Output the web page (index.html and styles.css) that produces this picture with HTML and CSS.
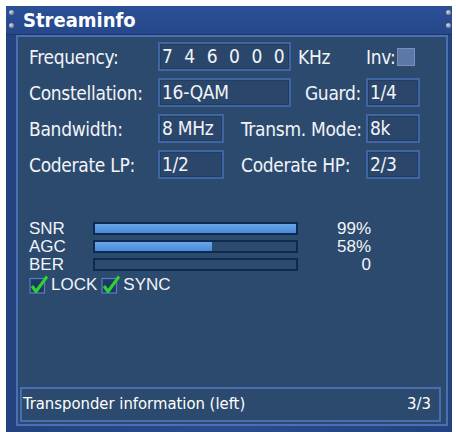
FILE: index.html
```html
<!DOCTYPE html>
<html>
<head>
<meta charset="utf-8">
<link rel="stylesheet" href="styles.css">
</head>
<body>
<div class="window">
  <div class="titlebar">
    <span class="screw s1"></span><span class="screw s2"></span>
    <span class="screw s3"></span><span class="screw s4"></span>
    <span class="title">Streaminfo</span>
  </div>
  <div class="frame">
    <div class="panel">
      <div class="fields">
        <div class="row">
          <span class="label">Frequency:</span>
          <span class="box wide freq">746000</span>
          <span class="unit">KHz</span>
          <span class="inv">Inv:</span>
          <span class="check"></span>
        </div>
        <div class="row">
          <span class="label">Constellation:</span>
          <span class="box wide">16-QAM</span>
          <span class="rlabel short">Guard:</span>
          <span class="box small">1/4</span>
        </div>
        <div class="row">
          <span class="label">Bandwidth:</span>
          <span class="box mid">8 MHz</span>
          <span class="rlabel long">Transm. Mode:</span>
          <span class="box small">8k</span>
        </div>
        <div class="row">
          <span class="label">Coderate LP:</span>
          <span class="box mid">1/2</span>
          <span class="rlabel long">Coderate HP:</span>
          <span class="box small">2/3</span>
        </div>
      </div>
      <div class="signal">
        <div class="srow">
          <span class="sname">SNR</span>
          <span class="bar"><span class="fill" style="width:100%"></span></span>
          <span class="sval">99%</span>
        </div>
        <div class="srow">
          <span class="sname">AGC</span>
          <span class="bar"><span class="fill" style="width:58%"></span></span>
          <span class="sval">58%</span>
        </div>
        <div class="srow">
          <span class="sname">BER</span>
          <span class="bar"><span class="fill" style="width:0%"></span></span>
          <span class="sval">0</span>
        </div>
        <div class="srow locks">
          <svg class="tick" width="20" height="20" viewBox="0 0 20 20"><rect x="1" y="3.5" width="14.5" height="14.5" fill="#1d3a66" stroke="#5a7cc0" stroke-width="1.2"/><path d="M3 11 L7 16.5 L18 1.5" fill="none" stroke="#2fd22f" stroke-width="3" stroke-linejoin="round"/></svg>
          <span class="lk">LOCK</span>
          <svg class="tick" width="20" height="20" viewBox="0 0 20 20"><rect x="1" y="3.5" width="14.5" height="14.5" fill="#1d3a66" stroke="#5a7cc0" stroke-width="1.2"/><path d="M3 11 L7 16.5 L18 1.5" fill="none" stroke="#2fd22f" stroke-width="3" stroke-linejoin="round"/></svg>
          <span class="lk">SYNC</span>
        </div>
      </div>
      <div class="status">
        <span>Transponder information (left)</span>
        <span>3/3</span>
      </div>
    </div>
  </div>
</div>
</body>
</html>
```

FILE: styles.css
```css
html, body {
  margin: 0;
  padding: 0;
  background: #ffffff;
}
body {
  font-family: "DejaVu Sans Condensed", "Liberation Sans", sans-serif;
  color: #f2f4f8;
}
.window {
  margin: 6px 0 0 6px;
  width: 446px;
  height: 426px;
  display: flex;
  flex-direction: column;
  background: #26478a;
}
.titlebar {
  position: relative;
  height: 28px;
  flex: none;
  background: linear-gradient(#2c5096, #26488a);
  border-bottom: 1px solid #1c356a;
}
.title {
  display: block;
  padding: 1px 0 0 17px;
  font-weight: bold;
  font-size: 20px;
  line-height: 26px;
  color: #ffffff;
}
.screw {
  position: absolute;
  width: 5px;
  height: 5px;
  border-radius: 50%;
  background: radial-gradient(circle at 35% 35%, #d8dde6, #7d8797 70%);
}
.s1 { left: 3px; top: 4px; }
.s2 { left: 3px; top: 17px; }
.s3 { left: 440px; top: 4px; }
.s4 { left: 440px; top: 17px; }
.frame {
  flex: 1;
  display: flex;
  padding: 0 4px 6px 10px;
  background: linear-gradient(90deg, #23427f, #2a4c8e 50%, #23427f);
}
.panel {
  flex: 1;
  display: flex;
  flex-direction: column;
  background: #2c4a6e;
  border: 2px solid #4a6fb2;
  padding: 5px 0 0 0;
}
.fields {
  display: flex;
  flex-direction: column;
  gap: 7px;
  padding-left: 11px;
}
.row {
  display: flex;
  align-items: center;
  height: 29px;
  font-size: 19px;
  letter-spacing: -0.3px;
  white-space: nowrap;
}
.label {
  width: 129px;
  flex: none;
}
.box {
  box-sizing: border-box;
  height: 29px;
  flex: none;
  border: 2px solid #3f65a4;
  box-shadow: inset 0 0 0 1px #223d62;
  background: #2a476b;
  padding: 0 0 0 2px;
  line-height: 25px;
  white-space: pre;
}
.wide { width: 133px; }
.mid { width: 66px; }
.small { width: 54px; }
.freq { letter-spacing: 11.5px; }
.unit { width: 68px; padding-left: 7px; flex: none; }
.inv { width: 31px; flex: none; }
.check {
  box-sizing: border-box;
  width: 18px;
  height: 18px;
  background: #5b78a6;
  border: 1px solid #7890b8;
}
.rlabel {
  flex: none;
  box-sizing: border-box;
  text-align: right;
  padding-right: 5px;
}
.rlabel.short { width: 75px; }
.rlabel.long { width: 142px; text-align: left; padding-left: 17px; }
.signal {
  margin-top: 41px;
  padding-left: 11px;
  font-family: "Liberation Sans", Arial, sans-serif;
  font-size: 17px;
  line-height: 18px;
}
.srow {
  display: flex;
  align-items: flex-start;
  height: 18px;
}
.sname { width: 64px; flex: none; }
.bar {
  box-sizing: border-box;
  margin-top: 2px;
  width: 205px;
  height: 13px;
  flex: none;
  border: 2px solid #0f2a52;
  background: #2c4a6e;
}
.fill {
  display: block;
  height: 100%;
  background: linear-gradient(#6aa6ea, #4a8ad6);
}
.sval { width: 73px; text-align: right; flex: none; }
.locks { margin-top: 1px; height: 20px; align-items: center; }
.tick { flex: none; margin-right: 2px; }
.lk { margin-right: 4px; }
.status {
  margin: auto 5px 2px 2px;
  box-sizing: border-box;
  height: 35px;
  display: flex;
  justify-content: space-between;
  align-items: center;
  border: 2px solid #4a6cb0;
  padding: 0 8px 2px 1px;
  font-size: 16.5px;
  color: #ffffff;
}
```
